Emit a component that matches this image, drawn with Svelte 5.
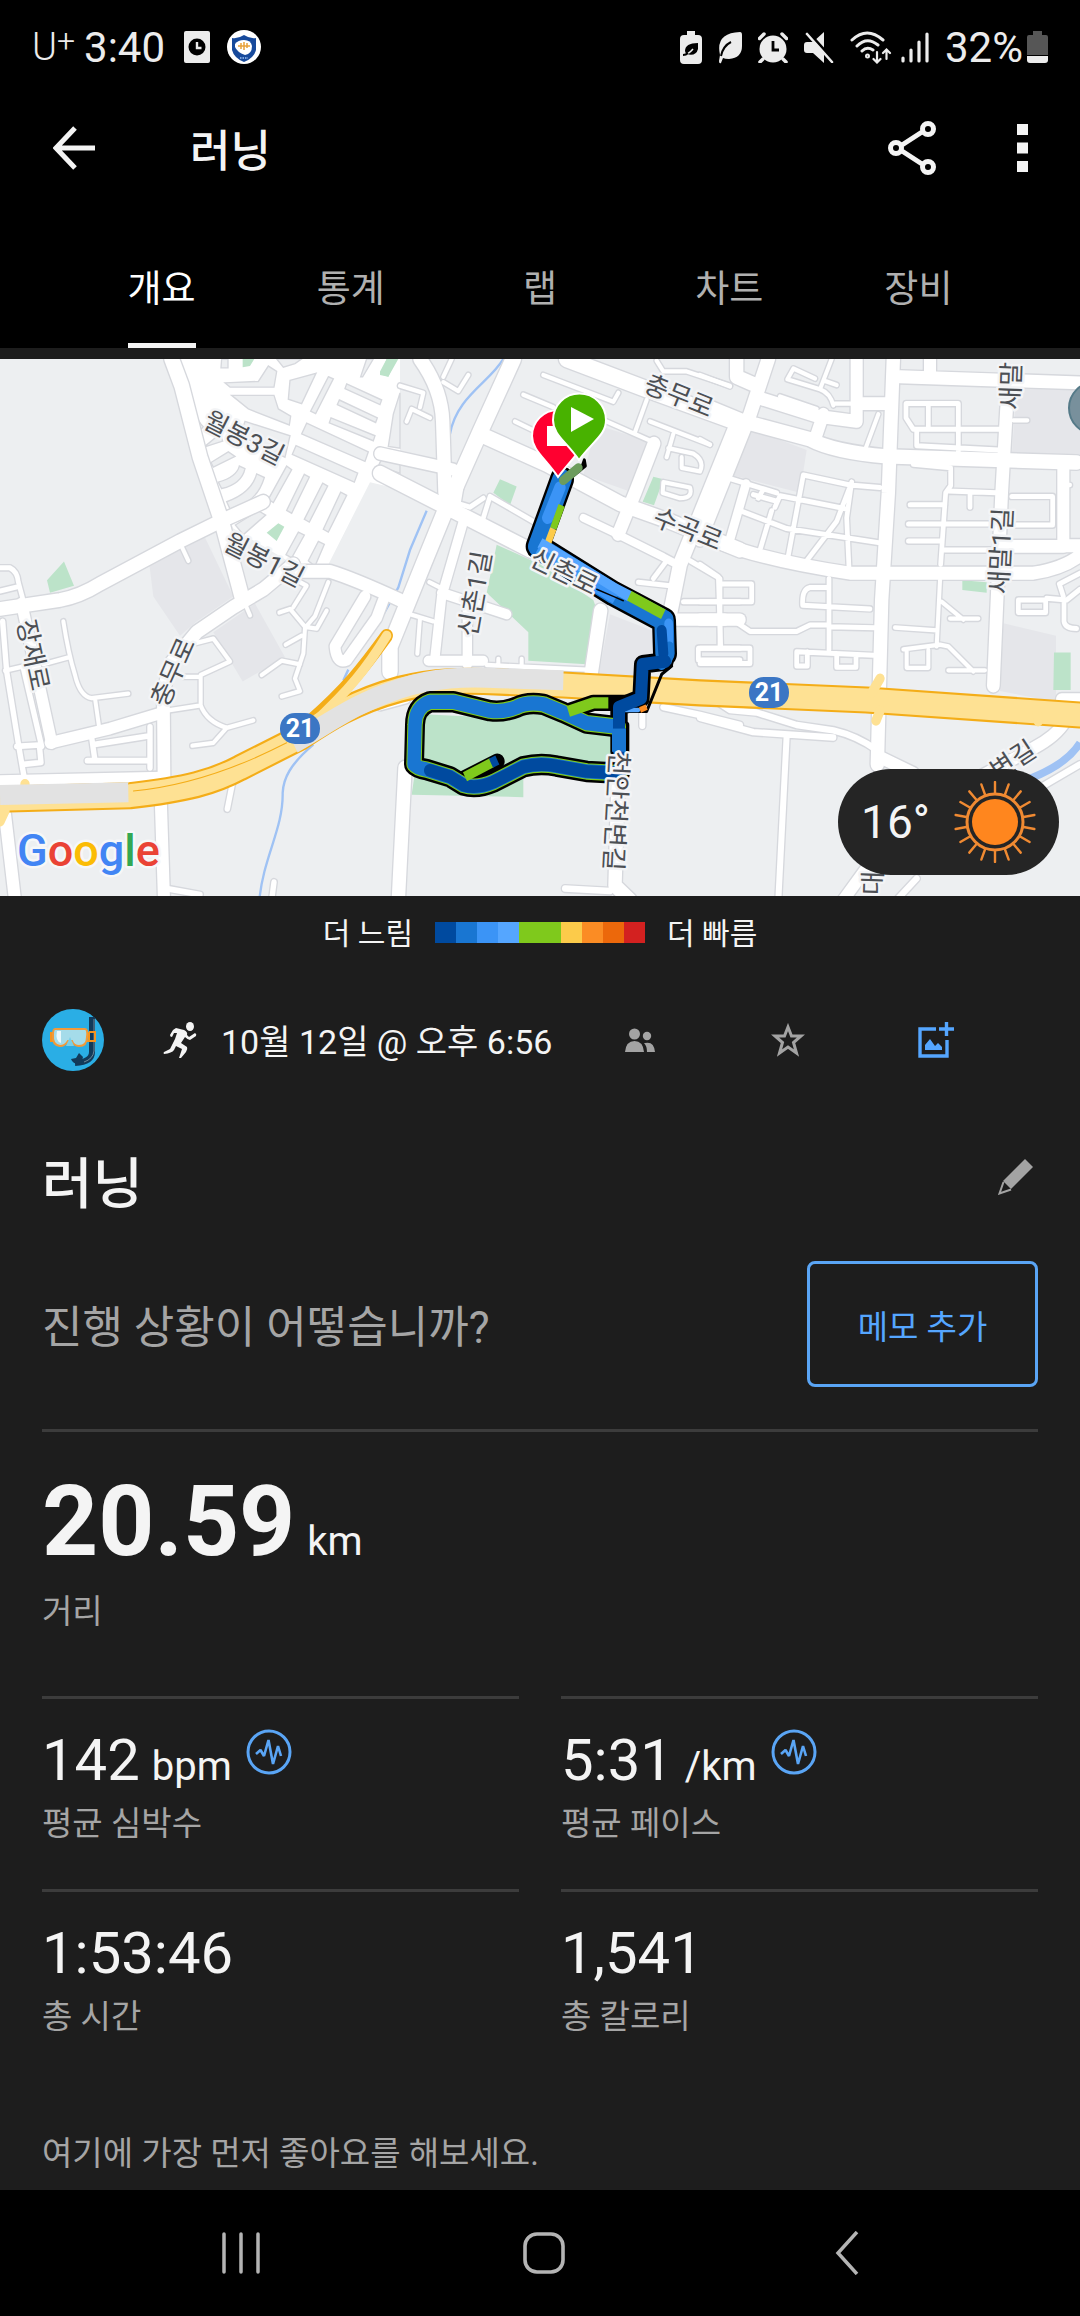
<script>
  const tabs = ['개요', '통계', '랩', '차트', '장비'];
  let activeTab = '개요';

  const paceColors = [
    '#004a9f', '#1976d2', '#3b94f6', '#55a6ff', '#7fc91c',
    '#7fc91c', '#fccb4a', '#fb8c24', '#ec680b', '#d32120'
  ];

  const stats = [
    { value: '142', unit: 'bpm', label: '평균 심박수', chart: true },
    { value: '5:31', unit: '/km', label: '평균 페이스', chart: true },
    { value: '1:53:46', unit: '', label: '총 시간', chart: false },
    { value: '1,541', unit: '', label: '총 칼로리', chart: false }
  ];

  const sunRays = Array.from({ length: 18 }, (_, i) => i * 20);

  // The map is drawn in three tiles side by side, each with its own origin.
  // roads: [width, path]
  const tiles = [
    {
      x: 0,
      land: 'M448 600L615 525L700 690L590 760L540 800L460 690ZM640 790L765 710L855 860L728 928Z',
      park: 'M728 25H763L750 45L728 48ZM1160 25H1195L1165 75L1142 68ZM150 680L141 645L192 592L222 660ZM800 512L835 485L853 495L830 535Z',
      open: 'M520 25H1200V390L1110 370L980 610L880 600L700 500L600 280Z',
      blocks: [
        'M860 325L875 335L820 427L805 418Z', 'M913 348L928 356L875 457L860 449Z', 'M968 373L983 381L928 482L913 474Z',
        'M1022 398L1040 407L985 510L970 502Z', 'M895 510L913 518L875 582L858 573Z', 'M955 536L973 544L945 605L925 590Z',
        'M612 272L660 235L668 255Z', 'M633 315L685 285L705 298L640 328Z', 'M655 370Q710 355 718 325L735 332Q725 375 665 388Z',
        'M680 425Q755 400 770 347L793 357Q770 430 690 445Z', 'M706 490L775 450L797 462L730 517Z',
        'M920 205L1105 285L1095 312L905 235Z', 'M888 268L1073 345L1063 370L877 292Z', 'M1040 95L1145 140L1140 153L1035 108Z',
        'M1018 140L1132 190L1127 203L1012 153Z', 'M993 190L1125 240L1120 254L988 204Z', 'M985 75L1000 81L947 178L932 171Z',
        'M675 92L775 88L805 45L830 60L822 104H690Z', 'M695 127H822L835 165L872 185L868 210L745 165Z', 'M870 85L948 65L905 150L865 138Z',
        'M665 25H684V50H663Z', 'M830 25H905L885 38L850 48Z', 'M1100 25H1120L1088 75H1082Z', 'M735 200L870 240L855 300L720 240Z',
        'M548 110L565 100Q580 190 610 215L590 235Z', 'M1150 295L1200 305V345L1135 325Z', 'M1165 270L1180 180L1200 120V275Z'
      ],
      roads: [
        [44, 'M515 25L545 100L600 300L665 480L725 690'],
        [38, 'M0 725L180 700Q240 690 300 655L540 535L660 480L790 425'],
        [14, 'M0 610L30 610Q52 620 55 650L75 720M0 675L58 662'],
        [34, 'M65 710L120 950L155 1100'],
        [16, 'M8 760L20 900L60 1130L75 1210M70 890L125 1110'],
        [12, 'M15 898L75 885M130 880L208 860M190 760Q205 850 225 910Q240 970 275 975L385 962M285 975L298 1060M545 550L565 590M735 710L750 743'],
        [38, 'M590 790L700 720L790 670L880 600M590 790L510 880L490 960L492 1200'],
        [32, 'M150 1100L330 1060L490 1015'],
        [12, 'M500 1010L602 995V910L690 872L640 808L590 820M550 915H602M602 995Q620 1040 680 1058L760 1037M680 1058L640 1100L577 1108'],
        [16, 'M275 1085L285 1150M262 1150H450M450 1055V1170M280 1105L450 1080M50 1110L118 1106L123 1155L70 1160'],
        [34, 'M0 1208L490 1198'],
        [36, 'M482 1250L492 1540M15 1300L45 1540'],
        [16, 'M500 1508L600 1525M697 1215L682 1285M822 1490L815 1540'],
        [36, 'M900 620H990Q1060 640 1200 700'],
        [32, 'M1095 690L1005 830Q1010 880 1040 868L1130 750L1150 700'],
        [12, 'M985 650L945 745L915 778L910 850L885 920L900 955L845 970M905 800L857 825M785 910L845 870L900 880M980 730L950 780L915 775L870 725L838 735M880 720L920 660L880 640']
      ]
    },
    {
      x: 380,
      land: 'M650 210L820 260L760 400L610 350ZM690 740L830 790V870L770 890V915H655Z',
      park: 'M0 60L20 25H48L25 75L0 70ZM340 400L360 362L410 382L390 435ZM820 355L850 362L822 435L788 425ZM350 545L480 600L640 700L655 740L620 880L445 870V790L320 680ZM130 1020L350 1030L450 1000L600 1050L700 1070V1170L430 1160V1252L95 1245Z',
      open: '',
      blocks: [],
      roads: [
        [46, 'M400 25L300 230L200 440L130 600L30 830V900'],
        [40, 'M120 25Q185 110 188 200L195 400'],
        [34, 'M0 290L220 335'],
        [42, 'M0 345L220 450L450 560L560 600L700 680L850 745'],
        [42, 'M310 240L500 320L720 430L870 480L1080 560'],
        [46, 'M560 25L800 110L1080 205'],
        [38, 'M822 262L765 400L715 515'],
        [42, 'M1065 220L900 600L870 740'],
        [12, 'M490 70L700 145L715 120M430 125L520 160M405 200L460 225M680 200L820 258M810 200L990 265M800 140L765 230M880 235L860 300M865 275L940 290Q975 310 960 340L905 330V300M850 370L930 385Q940 415 900 415L848 400ZM830 30L850 60L920 60L1050 100'],
        [12, 'M265 70L235 115L190 90M80 200L95 165L150 190M60 100L130 120L120 160M215 25L190 75'],
        [14, 'M310 470L330 410L460 480M245 375L235 430L270 440L310 415M270 475L350 500'],
        [22, 'M610 470L700 510L850 580L890 600'],
        [14, 'M775 650L870 660M860 590L820 640M930 590L1020 640V830M910 705H1080M955 835H1080M955 835V868H1080'],
        [34, 'M890 755H1080'],
        [28, 'M250 480L185 690L165 860M185 680L380 740M262 700V880M145 870H310'],
        [12, 'M148 650L180 665M90 740L160 760M120 750L112 850M320 882L620 895M355 865V880M425 865V880'],
        [40, 'M662 730L632 915M75 1170L55 1540M715 1180L705 1500L750 1540'],
        [18, 'M555 1508L690 1515M787 970V1052M850 1000L960 1022L1080 1050M0 1000L80 980']
      ]
    },
    {
      x: 700,
      land: 'M950 100H1140V300H935ZM150 220L320 280L300 400L95 350ZM910 765L1068 800V985L900 955Z',
      park: 'M787 645L860 650V680L787 672ZM1062 847H1112V952H1060Z',
      open: '',
      blocks: [],
      roads: [
        [40, 'M580 25L565 400L545 700L532 1160'],
        [40, 'M0 150L130 200L330 250Q400 285 560 298L1130 315'],
        [40, 'M110 25V75L170 100M205 25L150 180L0 530'],
        [36, 'M180 135L350 185L470 200V25M370 180L345 250M490 150H570M600 75L1140 92M690 25V75'],
        [12, 'M400 150H470M240 130L350 165M400 155Q390 120 360 110L262 82L280 52L345 80M395 25L360 110M410 98L370 85M535 180L495 280M0 70L90 102M0 250L30 265'],
        [14, 'M618 150H775V290M618 150V190L640 222H900M685 155V215M650 222V268L895 280'],
        [38, 'M920 160L905 400L880 940'],
        [12, 'M940 197H982M1100 378H1110'],
        [36, 'M1090 330V550H910M60 540Q200 590 450 625H1000Q1090 612 1140 575M1100 548H1140'],
        [26, 'M138 375L90 530'],
        [14, 'M90 360L230 400M120 450L260 500L540 540M225 440L240 408L440 445M310 350L262 590M310 350L450 378L540 385M455 370L410 480L320 590M455 370L440 470L447 610M215 450L180 560M160 405L225 422M190 390L175 415'],
        [14, 'M640 320L752 330V380L737 400L722 600M745 395L890 400M810 400V440M630 433H735M625 487H865M625 535H725M725 560H875M935 410H1058V490H930'],
        [12, 'M720 645L710 830M585 777L710 785M610 838L720 825L745 830L820 900M745 897H855M620 840V890H685V840M725 705L790 755M750 752H835'],
        [14, 'M387 640V840M387 665H330Q305 670 308 715L510 725M387 775L525 778M0 750H90L150 788H290L330 770H387M290 845L520 855M290 845V885H322V845M410 850V888H468V855'],
        [14, 'M0 600L55 635L62 830M62 655H155V705H0M0 835H150V878H0M955 700H1037V735H955ZM1040 695L1100 700L1140 670M1092 700V760Q1095 780 1130 780M1090 690L1078 655L1140 625'],
        [34, 'M0 755H75'],
        [18, 'M60 990L90 1008L170 1015L290 1050L400 1065Q470 1080 530 1120M0 1030L160 1070L400 1085M260 1080L235 1540M1140 1160L1030 1220M650 1480L590 1540'],
        [34, 'M540 1140L640 1185M1095 1040Q1070 1080 1000 1115L830 1200M1085 978H1140M500 1450L430 1540']
      ]
    }
  ];

  const highway =
    'M0 1258L390 1248C560 1230 640 1210 720 1170L900 1085C980 1035 1060 985 1200 950C1300 925 1400 925 1500 930L1690 938L2100 960L2600 980L3240 1022';

  const loopTrack =
    'M715 1055L620 1045L550 1015L490 992Q440 985 410 1000Q370 1015 330 1010L220 985H150Q105 1000 105 1050L102 1160Q110 1170 140 1175L210 1195L250 1218Q290 1230 340 1210L430 1167Q480 1155 530 1165L620 1180L720 1185';

  const streetTrack = 'M546 362L473 550L700 682L852 757L855 850';
  const crossingTrack = 'M855 872L788 880L783 975L717 1000V1125';

  const labels = [
    { text: '월봉3길', x: 244, y: 79, rotate: 27 },
    { text: '월봉1길', x: 264, y: 201, rotate: 27 },
    { text: '장재로', x: 33, y: 296, rotate: 78 },
    { text: '충무로', x: 173, y: 313, rotate: -66 },
    { text: '충무로', x: 679, y: 37, rotate: 22 },
    { text: '수곡로', x: 688, y: 170, rotate: 22 },
    { text: '신촌로', x: 564, y: 213, rotate: 26 },
    { text: '신촌1길', x: 475, y: 235, rotate: -80 },
    { text: '천안천변길', x: 616, y: 452, rotate: 93 },
    { text: '새말', x: 1011, y: 27, rotate: -88 },
    { text: '새말1길', x: 1001, y: 192, rotate: -87 },
    { text: '변길', x: 1013, y: 401, rotate: -33 },
    { text: '대', x: 873, y: 524, rotate: -88 }
  ];

  const shields = [
    { x: 300, y: 369 },
    { x: 769, y: 333 }
  ];
</script>

<div class="screen">
  <div class="status-bar">
    <span class="carrier">U<sup>+</sup></span>
    <span class="clock">3:40</span>
    <svg class="status-card" width="26" height="32" viewBox="0 0 26 32">
      <rect width="26" height="32" rx="2" fill="#ececec" />
      <circle cx="13" cy="16" r="8.500" fill="#000" />
      <path d="M13 11v6h4.500" fill="none" stroke="#ececec" stroke-width="2.400" />
    </svg>
    <svg width="34" height="34" viewBox="0 0 34 34">
      <circle cx="17" cy="17" r="17" fill="#fff" />
      <path d="M17 5q6 4 12 3v12q-2 8-12 12q-10-4-12-12V8q6 1 12-3z" fill="#174a9c" />
      <path d="M8 14q3-4 9-4q7 0 8 6q0 8-7 9q-8-3-10-8z" fill="#fff" />
      <path d="M11 16h12M14 13v6M17 12v8M20 13v5" stroke="#e7a13a" stroke-width="1.500" />
      <path d="M13 28h8" stroke="#9ec2f5" stroke-width="1.500" stroke-dasharray="1.500 1" />
    </svg>

    <div class="status-right">
      <svg width="22" height="33" viewBox="0 0 22 33">
        <path d="M7 0h8v4h3q4 0 4 4v21q0 4-4 4H4q-4 0-4-4V8q0-4 4-4h3z" fill="#ececec" />
        <path d="M18 12q-13 0-13 8l1 3q10 3 12-5zM3 25l6-4" fill="#000" />
        <path d="M3 24q5 0 10-6" fill="none" stroke="#ececec" stroke-width="1.500" />
        <path d="M3 24q3 0 5-2" fill="none" stroke="#000" stroke-width="2" />
      </svg>
      <svg class="leaf" width="24" height="33" viewBox="0 0 24 33">
        <path d="M22 1q2 0 2 3v11q0 12-13 13q-4 0-6-1L3 32q-2 1-2-2l1-6Q-3 2 22 1z" fill="#ececec" />
        <path d="M3 25Q5 15 13 11" fill="none" stroke="#000" stroke-width="2" />
      </svg>
      <svg width="30" height="31" viewBox="0 0 30 31">
        <circle cx="15" cy="17" r="13.500" fill="#ececec" />
        <path d="M5 27l-3 3M25 27l3 3M1.500 6.500L6 2M28.500 6.500L24 2" stroke="#ececec" stroke-width="3.500" stroke-linecap="round" />
        <path d="M15 9v9h6" fill="none" stroke="#000" stroke-width="2.800" />
      </svg>
      <svg width="30" height="31" viewBox="0 0 30 31">
        <path d="M3 10h6L20 0v31L9 21H3q-3 0-3-3v-5q0-3 3-3z" fill="#ececec" />
        <path d="M3 -1L32 31" stroke="#000" stroke-width="3" />
        <path d="M3 2L28 30" stroke="#ececec" stroke-width="2.600" stroke-linecap="round" />
      </svg>
      <svg width="42" height="33" viewBox="0 0 42 33" fill="none" stroke="#ececec" stroke-width="3" stroke-linecap="round">
        <path d="M2 9Q17-5 33 9M7 15Q17 5 28 14M12 20Q17 15 23 19" />
        <circle cx="17.500" cy="25" r="1" />
        <path d="M27 21v10M23.500 28l3.500 3.500l3.500-3.500M36.500 28V19M33 22l3.500-3.500L40 22" stroke-width="2.200" />
      </svg>
      <svg class="signal" width="28" height="31" viewBox="0 0 28 31" stroke="#ececec" stroke-width="3.200" stroke-linecap="round">
        <path d="M2 26v3M10 18v11M18 10v19M26 2v27" />
      </svg>
      <span class="battery-text">32%</span>
      <svg class="battery" width="21" height="32" viewBox="0 0 21 32">
        <path d="M6 0h9v4h4q2 0 2 2v18H0V6q0-2 2-2h4z" fill="#565656" />
        <path d="M0 25h21v4q0 3-3 3H3q-3 0-3-3z" fill="#ececec" />
      </svg>
    </div>
  </div>

  <header class="app-bar">
    <button class="icon-button" aria-label="뒤로">
      <svg width="42" height="44" viewBox="0 0 42 44" fill="none" stroke="#f4f4f4" stroke-width="5">
        <path d="M22 2L3 22L22 42M4 22H42" />
      </svg>
    </button>
    <h1>러닝</h1>
    <button class="icon-button share" aria-label="공유">
      <svg width="48" height="54" viewBox="0 0 48 54" fill="none" stroke="#f4f4f4" stroke-width="5">
        <path d="M14 24L34 11M14 30L34 43" />
        <circle cx="8" cy="27" r="5.500" />
        <circle cx="40" cy="8" r="5.500" />
        <circle cx="40" cy="46" r="5.500" />
      </svg>
    </button>
    <button class="icon-button" aria-label="더보기">
      <svg width="11" height="48" viewBox="0 0 11 48" fill="#f4f4f4">
        <path d="M0 0h11v11H0zM0 18.500h11v11H0zM0 37h11v11H0z" />
      </svg>
    </button>
  </header>

  <nav class="tabs">
    {#each tabs as tab}
      <button class="tab" class:active={tab === activeTab} on:click={() => (activeTab = tab)}>
        <span>{tab}</span>
      </button>
    {/each}
  </nav>

  <main>
    <div class="map">
      <svg class="map-canvas" viewBox="0 0 1080 537">
        <rect width="1080" height="537" fill="#edeff1" />

        {#each tiles as tile}
          <g transform="translate({tile.x} -9) scale(.33333 .35714)">
            <path d={tile.land} fill="#e5e6ea" />
            {#if tile.open}<path d={tile.open} fill="#fff" />{/if}
            {#each tile.blocks as block}
              <path d={block} fill="#edeff1" stroke="#d6d8dd" stroke-width="4" />
            {/each}
            <path d={tile.park} fill="#bce3c9" />
          </g>
        {/each}

        <g transform="translate(0 -9) scale(.33333 .35714)" fill="none" stroke="#9fc2f4" stroke-width="7">
          <path d="M940 1105C870 1160 850 1200 848 1240C850 1340 790 1420 778 1540M1030 925L1045 895M1150 740L1195 665L1230 560L1280 450M1310 410L1335 350M1350 235C1370 130 1470 90 1510 25" />
          <path d="M3240 1100Q3200 1160 3090 1200" stroke-width="22" />
        </g>

        <!-- casings go under every road so that junctions stay open -->
        {#each tiles as tile}
          <g class="roads" stroke="#d6d8dd" transform="translate({tile.x} -9) scale(.33333 .35714)">
            {#each tile.roads as [width, d]}
              <path {d} stroke-width={width + 8} />
            {/each}
          </g>
        {/each}
        {#each tiles as tile}
          <g class="roads" stroke="#fff" transform="translate({tile.x} -9) scale(.33333 .35714)">
            {#each tile.roads as [width, d]}
              <path {d} stroke-width={width} />
            {/each}
          </g>
        {/each}

        <g class="roads" transform="translate(0 -9) scale(.33333 .35714)">
          <path d="M930 1040C1040 950 1090 890 1160 800" stroke="#f4ad18" stroke-width="38" />
          <path d={highway} stroke="#f4ad18" stroke-width="76" />
          <path d={highway} stroke="#fee193" stroke-width="64" />
          <path d="M940 1045C1050 950 1100 890 1160 800M2640 920L2615 960M2640 1010L2628 1038M3110 1010L3115 1040M75 1215V1260M0 1320L15 1290" stroke="#fee193" stroke-width="28" />
          <path d="M400 1235Q620 1215 860 1100" stroke="#f4ad18" stroke-width="3" />
          <path class="flat" d="M0 1246L385 1238M880 1102C980 1050 1060 990 1200 948C1300 916 1400 914 1500 919L1690 925" stroke="#e2e2e2" stroke-width="56" />
        </g>

        <!-- recorded track -->
        <g class="track" transform="translate(380 -9) scale(.33333 .35714)">
          <g stroke="#000">
            <path d={loopTrack} stroke-width="60" />
            <path d={crossingTrack} stroke-width="52" />
            <path d="M570 1010L640 988H760" stroke-width="46" />
            <path d="M250 1200L352 1152" stroke-width="44" />
            <path d="M875 885L845 908L800 1012H735" stroke-width="9" />
            <path d="M738 1050V1125" stroke-width="20" />
            <path d="M605 330L613 308L616 325L570 360" stroke-width="9" />
            <path d={streetTrack} stroke-width="72" />
          </g>
          <path d={loopTrack} stroke="#7fc91c" stroke-width="46" />
          <path d={loopTrack} stroke="#1976d2" stroke-width="40" />
          <path d="M150 1177L210 1195L250 1218Q290 1230 340 1210L430 1167Q480 1155 530 1165L620 1180L720 1185" stroke="#004a9f" stroke-width="36" />
          <path class="flat" d="M565 1012L640 988H685" stroke="#7fc91c" stroke-width="32" />
          <path class="flat" d="M255 1195L335 1156" stroke="#7fc91c" stroke-width="28" />
          <path class="flat" d="M333 1157L352 1148" stroke="#004a9f" stroke-width="28" />
          <path d="M730 1008H775" stroke="#55a6ff" stroke-width="12" />
          <path class="flat" d="M780 1008L800 1000" stroke="#fb8c24" stroke-width="16" />
          <path d={streetTrack} stroke="#1976d2" stroke-width="58" />
          <path d="M866 765V850" stroke="#3b94f6" stroke-width="26" />
          <path d="M868 830L862 870L845 882" stroke="#1976d2" stroke-width="28" />
          <path d="M845 785L850 850" stroke="#004a9f" stroke-width="30" />
          <path d={crossingTrack} stroke="#004a9f" stroke-width="36" />
          <path class="flat" d="M717 1060V1125" stroke="#1976d2" stroke-width="42" />
          <path d="M540 385L503 470" stroke="#3b94f6" stroke-width="34" />
          <path class="flat" d="M545 435L520 500" stroke="#7fc91c" stroke-width="20" />
          <path class="flat" d="M520 500L502 545" stroke="#fccb4a" stroke-width="20" />
          <path class="flat" d="M480 540L705 668L750 690" stroke="#55a6ff" stroke-width="30" />
          <path class="flat" d="M748 688L850 740" stroke="#7fc91c" stroke-width="30" />
          <path class="flat" d="M470 563L705 698" stroke="#3b94f6" stroke-width="28" />
          <path d="M650 670L700 690L730 702" stroke="#000" stroke-width="4" />
          <path d="M550 365L595 330" stroke="#6c9c5c" stroke-width="26" />
        </g>

        <g class="map-labels">
          {#each labels as label}
            <text transform="translate({label.x} {label.y}) rotate({label.rotate})" dy="9">{label.text}</text>
          {/each}
        </g>

        {#each shields as shield}
          <g class="shield" transform="translate({shield.x} {shield.y})">
            <rect x="-20" y="-15" width="40" height="31" rx="15" fill="#3b76c4" />
            <text y="9">21</text>
          </g>
        {/each}

        <!-- finish and start pins -->
        <path d="M558 118C545 99 532 91 532 77A26 26 0 0 1 584 77C584 91 572 99 558 118Z" fill="#ff0030" stroke="#fff" stroke-width="2" />
        <rect x="547" y="67" width="21" height="20" fill="#fff" />
        <path d="M579 101C566 82 553 76 553 61A26 26 0 0 1 606 61C606 76 593 82 579 101Z" fill="#48b200" stroke="#fff" stroke-width="2" />
        <path d="M571 48L594 60L571 73Z" fill="#fff" />

        <circle cx="1095" cy="49" r="26" fill="#78909c" stroke="#557a88" stroke-width="2" />

        <text class="google" x="17" y="507"><tspan fill="#4285f4">G</tspan><tspan fill="#ea4335">o</tspan><tspan fill="#fbbc05">o</tspan><tspan fill="#4285f4">g</tspan><tspan fill="#34a853">l</tspan><tspan fill="#ea4335">e</tspan></text>
      </svg>

      <div class="weather">
        <span>16°</span>
        <svg width="82" height="82" viewBox="-41 -41 82 82">
          <circle r="23" fill="#ff861e" />
          <circle r="28" fill="none" stroke="#f08a32" stroke-width="3" />
          {#each sunRays as angle}
            <path d="M0-29V-40" stroke="#f08a32" stroke-width="2.400" stroke-linecap="round" transform="rotate({angle})" />
          {/each}
        </svg>
      </div>
    </div>

    <div class="legend">
      <span>더 느림</span>
      <div class="legend-bar">
        {#each paceColors as color}
          <i style="background: {color}"></i>
        {/each}
      </div>
      <span>더 빠름</span>
    </div>

    <div class="meta">
      <svg class="avatar" width="62" height="62" viewBox="0 0 62 62">
        <circle cx="31" cy="31" r="31" fill="#2aaee5" />
        <path d="M50 8V43Q50 53 33 54" fill="none" stroke="#123a5a" stroke-width="6" />
        <path d="M29 50l5-1l3-5l4 4l-2 7q-8 1-10-5z" fill="#123a5a" />
        <path d="M52 10V42Q51 50 42 53" fill="none" stroke="#6f8798" stroke-width="1" />
        <path d="M9 24h38v8H9zM47 23h6v9h-6" fill="none" stroke="#f5941e" stroke-width="2" />
        <path d="M13 20H43Q46 20 45 28Q45 37 37 37Q32 37 30 32H26Q23 37 18 37Q10 36 11 26Q11 20 13 20Z" fill="#a5dcea" stroke="#f19a3a" stroke-width="2" />
        <path d="M15 22h4v12q-6-2-4-12z" fill="#eaf9fc" />
        <path d="M24 37l4-9l4 9z" fill="#78cfe9" />
      </svg>
      <svg class="runner" width="34" height="36" viewBox="0 0 34 36" fill="#f4f4f4">
        <ellipse cx="27" cy="4.500" rx="4" ry="4.500" />
        <path d="M13 6L21 8Q25 10 24 13L26 15L32 11Q34 12 33 14L27 18Q25 18 22 15L18 21L24 25Q25 27 23 30L18 36H16L19 27L13 24L11 28Q9 31 1 32Q0 31 1 30L7 27L12 17L14 11L11 11L9 15Q7 15 7 13L10 8Z" />
      </svg>
      <time>10월 12일 @ 오후 6:56</time>
      <div class="meta-actions">
        <button class="icon-button" aria-label="공개 범위">
          <svg width="30" height="24" viewBox="0 0 30 24" fill="#a3a3a3">
            <circle cx="9.500" cy="6" r="5.500" />
            <circle cx="22" cy="8" r="4.200" />
            <path d="M0 24Q1 13 9.500 13Q18 13 19 24zM20 15Q29 13 30 24H22Q22 18 19 15z" />
          </svg>
        </button>
        <button class="icon-button" aria-label="즐겨찾기">
          <svg width="34" height="34" viewBox="0 0 34 34" fill="none" stroke="#a3a3a3" stroke-width="3">
            <path d="M17 4L20.500 13H30L22.500 19.500L25.500 30L17 24L8.500 30L11.500 19.500L4 13H13.500Z" />
          </svg>
        </button>
        <button class="icon-button" aria-label="사진 추가">
          <svg width="36" height="36" viewBox="0 0 36 36" fill="none" stroke="#55a6ff" stroke-width="3.400">
            <path d="M18 7H2V34H29V18M21 7H36M28.500 0V14" />
            <path d="M7 28V23L12 17L17 24L20 21L24 25V28Z" fill="#55a6ff" stroke="none" />
          </svg>
        </button>
      </div>
    </div>

    <div class="title-row">
      <h2>러닝</h2>
      <button class="icon-button edit" aria-label="제목 편집">
        <svg width="36" height="36" viewBox="0 0 36 36">
          <path d="M27 0L35 8L13 30L5 22Z" fill="#a3a3a3" />
          <path d="M5.500 23L1.500 34.500L13 30.500" fill="none" stroke="#a3a3a3" stroke-width="2" />
        </svg>
      </button>
    </div>

    <div class="note-row">
      <p>진행 상황이 어떻습니까?</p>
      <button class="note-button">메모 추가</button>
    </div>

    <section class="distance">
      <div class="value">20.59 <small>km</small></div>
      <div class="label">거리</div>
    </section>

    <section class="stats">
      {#each stats as stat}
        <div class="stat">
          <div class="value">
            {stat.value} {#if stat.unit}<small>{stat.unit}</small>{/if}
            {#if stat.chart}
              <button class="icon-button chart" aria-label="{stat.label} 차트">
                <svg width="46" height="46" viewBox="0 0 46 46" fill="none" stroke="#5aa5f5">
                  <circle cx="23" cy="23" r="21" stroke-width="3" />
                  <path d="M10 25L14.500 21L18 27L22.500 11L27 35L32 17L35 27" stroke-width="2.600" stroke-linejoin="bevel" />
                </svg>
              </button>
            {/if}
          </div>
          <div class="label">{stat.label}</div>
        </div>
      {/each}
    </section>

    <p class="like-hint">여기에 가장 먼저 좋아요를 해보세요.</p>
  </main>

  <footer class="system-nav">
    <button class="icon-button" aria-label="최근 앱">
      <svg width="38" height="42" viewBox="0 0 38 42" stroke="#b4b4b4" stroke-width="3.500" stroke-linecap="round">
        <path d="M2 2V40M19 2V40M36 2V40" />
      </svg>
    </button>
    <button class="icon-button" aria-label="홈">
      <svg width="42" height="42" viewBox="0 0 42 42" fill="none" stroke="#b4b4b4" stroke-width="3.600">
        <rect x="2" y="2" width="38" height="38" rx="12" />
      </svg>
    </button>
    <button class="icon-button" aria-label="뒤로 가기">
      <svg width="24" height="44" viewBox="0 0 24 44" fill="none" stroke="#b4b4b4" stroke-width="3.500">
        <path d="M22 1L3 22L22 43" />
      </svg>
    </button>
  </footer>
</div>

<style>
  :global(body) {
    background: #000;
  }

  .screen {
    min-height: 100vh;
    display: flex;
    flex-direction: column;
    background: #000;
    color: #f4f4f4;
    font-family: Roboto, "Noto Sans CJK KR", sans-serif;
  }

  svg {
    display: block;
    flex: none;
  }

  h1, h2, p {
    margin: 0;
  }

  button {
    font: inherit;
    color: inherit;
    background: none;
    border: none;
    padding: 0;
    cursor: pointer;
  }

  .icon-button {
    display: flex;
    align-items: center;
    justify-content: center;
  }

  /* status bar */
  .status-bar {
    display: flex;
    align-items: center;
    height: 94px;
    padding: 0 32px;
    font-size: 42px;
    color: #ececec;
  }

  .carrier {
    font-size: 38px;
    font-weight: 300;
  }

  .carrier sup {
    font-size: 32px;
    line-height: 0;
    vertical-align: 8px;
  }

  .clock {
    margin-left: 9px;
  }

  .status-card {
    margin: 0 17px 0 19px;
  }

  .status-right {
    display: flex;
    align-items: center;
    gap: 16px;
    margin-left: auto;
  }

  .status-right .battery {
    margin-left: -12px;
  }

  .status-right .signal {
    margin-left: -7px;
  }

  /* app bar */
  .app-bar {
    display: flex;
    align-items: center;
    height: 108px;
    padding: 0 52px 0 53px;
  }

  h1 {
    flex: 1;
    padding: 8px 0 0 95px;
    font-size: 44px;
    font-weight: 500;
    line-height: 64px;
  }

  .share {
    margin-right: 81px;
  }

  .tabs {
    display: grid;
    grid-template-columns: repeat(5, 1fr);
    height: 146px;
    padding: 0 67px;
  }

  .tab {
    display: flex;
    justify-content: center;
    font-size: 37px;
    line-height: 54px;
    color: #b0b0b0;
  }

  .tab span {
    box-sizing: border-box;
    height: 146px;
    padding-top: 61px;
    border-bottom: 5px solid transparent;
  }

  .tab.active span {
    color: #fff;
    border-color: #f4f4f4;
  }

  main {
    flex: 1;
    padding-top: 11px;
    background: #1d1d1d;
  }

  /* map */
  .map {
    position: relative;
  }

  .map-canvas {
    width: 100%;
    height: auto;
  }

  .roads, .track {
    fill: none;
    stroke-linecap: round;
    stroke-linejoin: round;
  }

  .roads .flat, .track .flat {
    stroke-linecap: butt;
  }

  .map-labels {
    font-size: 26px;
    text-anchor: middle;
    fill: #4c4f54;
    stroke: #f3f4f6;
    stroke-width: 5px;
    stroke-linejoin: round;
    paint-order: stroke;
  }

  .shield {
    font-size: 25px;
    font-weight: 700;
    text-anchor: middle;
    fill: #fff;
  }

  .google {
    font-size: 45px;
    font-weight: 500;
    stroke: #f6f7f8;
    stroke-width: 5px;
    stroke-linejoin: round;
    paint-order: stroke;
  }

  .weather {
    position: absolute;
    right: 21px;
    bottom: 21px;
    display: flex;
    align-items: center;
    gap: 24px;
    box-sizing: border-box;
    height: 106px;
    padding: 0 23px;
    border-radius: 53px;
    background: #252525;
    font-size: 46px;
  }

  .legend {
    display: flex;
    align-items: center;
    justify-content: center;
    gap: 22px;
    height: 72px;
    font-size: 30px;
    line-height: 44px;
  }

  .legend span {
    padding-top: 4px;
  }

  .legend-bar {
    display: grid;
    grid-template-columns: repeat(10, 21px);
    height: 21px;
  }

  /* activity details */
  .meta {
    display: flex;
    align-items: center;
    height: 144px;
    padding: 0 70px 0 42px;
  }

  .runner {
    margin: 0 24px 0 59px;
  }

  time {
    padding-top: 4px;
    font-size: 34px;
    line-height: 50px;
    white-space: nowrap;
  }

  .meta-actions {
    display: grid;
    grid-template-columns: repeat(3, 148px);
    margin-left: auto;
  }

  .title-row, .note-row {
    display: flex;
    align-items: center;
    justify-content: space-between;
    margin: 0 42px;
  }

  .title-row {
    height: 143px;
    padding-bottom: 6px;
  }

  .edit {
    padding: 0 4px 14px 0;
  }

  h2 {
    font-size: 55px;
    font-weight: 500;
    line-height: 80px;
  }

  .note-row {
    padding-bottom: 42px;
    border-bottom: 3px solid #3c3c3c;
  }

  .note-row p {
    padding-top: 8px;
    font-size: 44px;
    line-height: 64px;
    color: #a5a5a5;
  }

  .note-button {
    box-sizing: border-box;
    width: 231px;
    height: 126px;
    padding-top: 2px;
    border: 3px solid #5aa5f5;
    border-radius: 8px;
    font-size: 33px;
    color: #55a6ff;
  }

  .value {
    display: flex;
    align-items: baseline;
    gap: 12px;
    font-size: 58px;
    line-height: 80px;
  }

  .value small {
    font-size: 40px;
    font-weight: 400;
    line-height: 40px;
  }

  .label {
    font-size: 33px;
    line-height: 48px;
    color: #a5a5a5;
  }

  .distance {
    padding: 35px 42px 60px;
  }

  .distance .value {
    font-size: 98px;
    font-weight: 700;
    line-height: 110px;
    margin-bottom: 11px;
  }

  .stats {
    display: grid;
    grid-template-columns: 1fr 1fr;
    column-gap: 42px;
    padding: 0 42px;
  }

  .stat {
    box-sizing: border-box;
    height: 193px;
    padding-top: 21px;
    border-top: 3px solid #3c3c3c;
  }

  .chart {
    align-self: flex-start;
    margin: 9px 0 0 2px;
  }

  .like-hint {
    padding: 48px 42px 12px;
    font-size: 33px;
    line-height: 48px;
    color: #a5a5a5;
  }

  .system-nav {
    display: grid;
    grid-template-columns: repeat(3, 1fr);
    height: 126px;
    padding: 0 82px 0 90px;
  }
</style>
